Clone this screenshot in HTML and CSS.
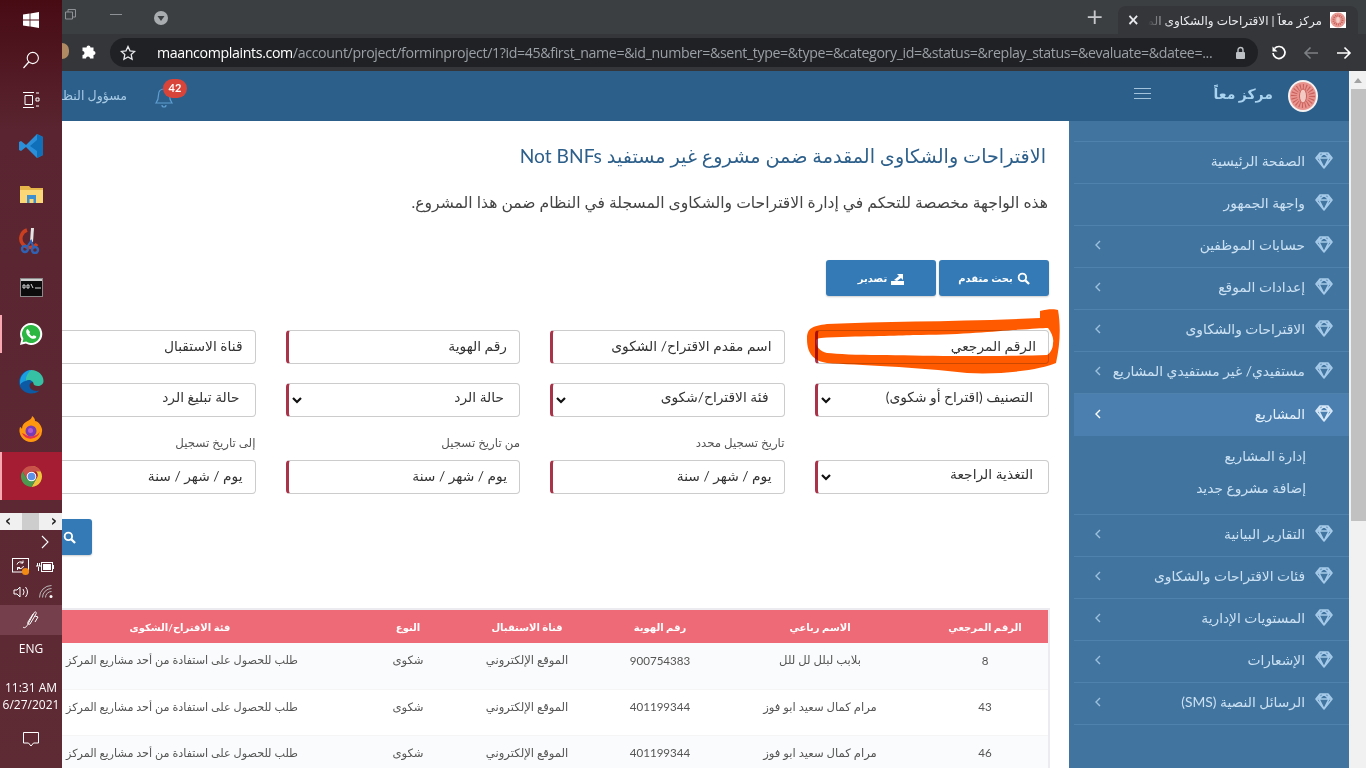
FILE: index.html
```html
<!DOCTYPE html>
<html lang="ar">
<head>
<meta charset="utf-8">
<title>مركز معاً</title>
<link rel="stylesheet" href="styles.css">
</head>
<body>
<svg class="defs" width="0" height="0" aria-hidden="true">
  <defs>
    <symbol id="gem" viewBox="0 0 18 18"><path d="M5 2h8l4 5-8 10L1 7z M1 7h16 M5 2l-1 5 5 10 5-10-1-5 M4 7l5-5 5 5" fill="none" stroke="currentColor" stroke-width="1.6" stroke-linejoin="round"/></symbol>
    <symbol id="chev" viewBox="0 0 8 12"><path d="M6 2 2 6l4 4" fill="none" stroke="currentColor" stroke-width="1.4"/></symbol>
    <symbol id="down" viewBox="0 0 12 8"><path d="M2 2l4 4 4-4" fill="none" stroke="#111" stroke-width="2.2"/></symbol>
    <symbol id="lens" viewBox="0 0 14 14"><circle cx="5.8" cy="5.8" r="4" fill="none" stroke="currentColor" stroke-width="2"/><path d="M9 9l4 4" stroke="currentColor" stroke-width="2.4"/></symbol>
  </defs>
</svg>
<div class="screen">
  <aside class="taskbar">
    <div class="tile t40"><svg width="16" height="16" viewBox="0 0 16 16"><path fill="#fff" d="M0 2.6 6.6 1.6V7.6H0zM7.4 1.5 16 0V7.6H7.4zM0 8.4H6.6V14.4L0 13.4zM7.4 8.4H16V16L7.4 14.6z"/></svg></div>
    <div class="tile t39"><svg width="18" height="18" viewBox="0 0 18 18"><circle cx="10.8" cy="7" r="5.6" fill="none" stroke="#fff" stroke-width="1.1"/><path d="M6.8 11 1.5 17" stroke="#fff" stroke-width="1.2"/></svg></div>
    <div class="tile t41"><svg width="18" height="18" viewBox="0 0 18 18"><path d="M1 1.5h11M1 16.5h11M3 4.5h7.5v9H3z" fill="none" stroke="#fff" stroke-width="1"/><path d="M14 2h3M14 7h3v3h-3zM14 15h3" fill="none" stroke="#fff"/></svg></div>
    <div class="tile t48 first"><svg width="26" height="26" viewBox="0 0 26 26"><path fill="#2a8fd8" d="M19 1 25 4v18l-6 3L8 14 3 18 1 17V9l2-1 5 4z"/><path fill="#0f6fb8" d="M19 1 25 4v18l-6 3V18l-7-5 7-6z"/></svg></div>
    <div class="tile t48"><svg width="23" height="20" viewBox="0 0 23 20"><path fill="#e6b64b" d="M0 2h9l2 2h12v15H0z"/><path fill="#fbd777" d="M0 6h23v13H0z"/><path fill="#3d8fd0" d="M7 11h9v8h-2.5v-4h-4v4H7z"/></svg></div>
    <div class="tile t46"><svg width="24" height="26" viewBox="0 0 24 26"><path d="M8 2a9 9 0 1 0 10 14" fill="none" stroke="#c93f1f" stroke-width="3.5"/><path d="M12 0h3l-1 14h-3z" fill="#e5e5e5"/><circle cx="6" cy="21" r="3" fill="none" stroke="#2f62b5" stroke-width="2.4"/><circle cx="16" cy="22" r="3" fill="none" stroke="#2f62b5" stroke-width="2.4"/><path d="M8 19l4-6 3 7" fill="none" stroke="#2f62b5" stroke-width="2"/></svg></div>
    <div class="tile t46"><svg width="23" height="19" viewBox="0 0 23 19"><rect x=".5" y=".5" width="22" height="18" fill="#0c0c0c" stroke="#8a8a8a"/><path d="M1 1h21v2H1z" fill="#cfcfcf"/><path d="M3 7h2v3H3zM7 7h2v3H7zM11 6l2 4M15 10h6" stroke="#ddd" fill="none"/></svg></div>
    <div class="tile t48 open"><svg width="24" height="24" viewBox="0 0 24 24"><path fill="#fff" d="M12 1a11 11 0 0 0-9.6 16.300L1 23l5.900-1.400A11 11 0 1 0 12 1z"/><path fill="#2bb741" d="M12 3a9 9 0 0 0-7.600 13.800L3.600 20.300l3.600-.8A9 9 0 1 0 12 3z"/><path fill="#fff" d="M8.600 7c-.5 0-1.400.9-1.400 2.400 0 3 3.800 7.400 7.600 7.400 1.500 0 2.500-1 2.500-2 0-.4-2.300-1.500-2.600-1.500-.4 0-1 1-1.400 1-.8 0-3-2.100-3-3 0-.4.800-.9.800-1.400C10.100 9.600 9.300 7 8.600 7z"/></svg></div>
    <div class="tile t47"><svg width="25" height="25" viewBox="0 0 25 25"><path fill="#0c59a4" d="M12 1a12 12 0 0 0-11.500 15C2 22 8 24.500 12.500 24.500c3.500 0 6-1 8-3-5 1.500-10-1-10-5 0-2 2-3.500 4-3.500z"/><path fill="#37c1a4" d="M12.500 1C19 1 24.500 6 24.500 12c0 3.500-3 5-5.500 5-3 0-4.500-1-4.500-2.500 0-2-4-5-8-2.500C6 6 8 1 12.500 1z"/><path fill="#1b9de2" d="M1 13C1 7 6 1 12.500 1 9 3 7 7 6.500 12 4 12.500 2 14 1 16z"/></svg></div>
    <div class="tile t47"><svg width="24" height="26" viewBox="0 0 24 26"><path fill="#ff980e" d="M12 26A11.500 11.500 0 0 1 1 11c1 0 1.500 1 2 2 0-4 2-6 4-7 3-2 6-3 6-6 3 2 3 4 3 5 3 0 6 4 7 8a11.500 11.500 0 0 1-11 13z"/><path fill="#e8304f" d="M3 17a9.500 9.500 0 0 0 18-2c-2 5-9 7-14 4-2-1-3-2-4-2z"/><circle cx="12" cy="15" r="5.500" fill="#7b3bb5"/><circle cx="11.500" cy="14.500" r="2.500" fill="#b05cd0"/></svg></div>
    <div class="tile t48 active"><svg width="23" height="23" viewBox="0 0 24 24"><path fill="#e0a82e" d="M12 1a11 11 0 0 1 9.500 5.500L12 6.500z"/><path fill="#f0c53e" d="M21.500 6.500A11 11 0 0 1 12 23l4.800-8.200a5.500 5.500 0 0 0-.2-8.300z"/><path fill="#c9524a" d="M12 1a11 11 0 0 0-9.500 5.500l4.800 8.200 0-3a5 5 0 0 1 4.700-5.200h9.500A11 11 0 0 0 12 1z"/><path fill="#4c9a4f" d="M2.500 6.500A11 11 0 0 0 12 23l4.800-8.200-9.500 0z"/><circle cx="12" cy="12" r="5" fill="#fff"/><circle cx="12" cy="12" r="4" fill="#5c91e6"/></svg></div>
    <div class="tray-scroll"><span class="arrow">‹</span><span class="knob"></span><span class="arrow">›</span></div>
    <div class="tray-more"><svg width="10" height="14" viewBox="0 0 10 14"><path d="M2 1l6 6-6 6" fill="none" stroke="#fff" stroke-width="1.100"/></svg></div>
    <div class="tray-row">
      <svg width="22" height="18" viewBox="0 0 22 18"><rect x="1.500" y=".5" width="16" height="13.500" fill="none" stroke="#fff"/><path d="M6 6.500a3.500 3.500 0 0 1 6-1.500M12.500 8a3.500 3.500 0 0 1-6 1.500M12 2.500V5H9.500M6.500 12V9.500H9" fill="none" stroke="#fff"/><circle cx="14.500" cy="13.500" r="3.600" fill="#f08a14"/></svg>
      <svg width="18" height="12" viewBox="0 0 18 12"><rect x="5.500" y="1.500" width="11" height="9" fill="none" stroke="#fff"/><rect x="7" y="3" width="8" height="6" fill="#fff"/><path d="M17.500 4v4M0 5h5M1.500 2v3M3.500 2v3M2.500 6v4" stroke="#fff" fill="none"/></svg>
    </div>
    <div class="tray-row tight">
      <svg width="17" height="14" viewBox="0 0 17 14"><path d="M1 5h3l3-3v10L4 9H1zM10 4a5 5 0 0 1 0 6M12.500 2a8 8 0 0 1 0 10" fill="none" stroke="#fff"/></svg>
      <svg width="14" height="13" viewBox="0 0 14 13"><path d="M.5 12.500A12 12 0 0 1 12.500.5M3.500 12.500a9 9 0 0 1 9-9M6.500 12.500a6 6 0 0 1 6-6" fill="none" stroke="#bbb"/><circle cx="12" cy="11.500" r="1.500" fill="#fff"/></svg>
    </div>
    <div class="pen"><svg width="20" height="20" viewBox="0 0 20 20"><path d="M2 17c2 2 4-1 5-3l6-11c1-2 3-1 2 1l-6 10c-1 1-3 0-2-2l5-8M14 6l3 1-3 5" fill="none" stroke="#fff"/></svg></div>
    <div class="lang">ENG</div>
    <div class="clock">11:31 AM<br>6/27/2021</div>
    <div class="notify"><svg width="16" height="15" viewBox="0 0 16 15"><path d="M.5.500h15v10.500h-5l-2.500 3-2.500-3h-5z" fill="none" stroke="#fff"/></svg></div>
  </aside>

  <div class="window">
    <div class="tabstrip">
      <svg class="ctl-restore" width="11" height="11" viewBox="0 0 11 11"><path d="M.5 3h7v7h-7zM3 3V.5h7.500V8H8" fill="none" stroke="#8e9196"/></svg>
      <span class="ctl-min"></span>
      <svg class="ctl-menu" width="14" height="14" viewBox="0 0 14 14"><circle cx="7" cy="7" r="7" fill="#aaadb0"/><path d="M3.500 5h7L7 10z" fill="#3c3f42"/></svg>
      <span class="new-tab">+</span>
      <div class="tab">
        <span class="tab-x">×</span>
        <span class="tab-title" dir="rtl">مركز معاً | الاقتراحات والشكاوى المق</span>
        <svg class="fav" width="16" height="16" viewBox="0 0 16 16"><rect width="16" height="16" fill="#fff"/><circle cx="8" cy="8" r="7.500" fill="#e79a94"/><circle cx="8" cy="8" r="4.500" fill="none" stroke="#c6605a" stroke-width="2" stroke-dasharray="1 1"/><ellipse cx="8" cy="8" rx="1.800" ry="3" fill="#f3cfc9"/></svg>
      </div>
    </div>
    <div class="toolbar">
      <span class="avatar"></span>
      <svg class="puzzle" width="15" height="15" viewBox="0 0 15 15"><path fill="#fff" d="M5.500 2.500a2 2 0 1 1 4 0h3v3.500a2 2 0 1 1 0 4V13.500H9a2 2 0 1 0-4 0H1.500V10a2 2 0 1 0 0-4V2.500z"/></svg>
      <div class="omnibox">
        <svg width="16" height="16" viewBox="0 0 16 16"><path d="M8 1.500l2 4.300 4.700.6-3.500 3.200.9 4.700L8 12l-4.100 2.300.9-4.700L1.300 6.400 6 5.800z" fill="none" stroke="#e8eaed" stroke-width="1.300"/></svg>
        <div class="url"><b>maancomplaints.com</b>/account/project/forminproject/1?id=45&amp;first_name=&amp;id_number=&amp;sent_type=&amp;type=&amp;category_id=&amp;status=&amp;replay_status=&amp;evaluate=&amp;datee=...</div>
        <svg width="11" height="14" viewBox="0 0 11 14"><path d="M3 6V4a2.500 2.500 0 0 1 5 0v2" fill="none" stroke="#bdc1c6" stroke-width="1.400"/><rect x="1" y="6" width="9" height="7" rx="1" fill="#bdc1c6"/></svg>
      </div>
      <svg class="nav-reload" width="16" height="16" viewBox="0 0 16 16"><path d="M3.500 3.500A6 6 0 1 1 2 8" fill="none" stroke="#fff" stroke-width="1.700"/><path d="M1.500 1.500v5h5z" fill="#fff"/></svg>
      <svg class="nav-back" width="16" height="14" viewBox="0 0 16 14"><path d="M15 7H2M7.500 1.500 2 7l5.500 5.500" fill="none" stroke="#7d8084" stroke-width="1.600"/></svg>
      <svg class="nav-fwd" width="16" height="14" viewBox="0 0 16 14"><path d="M1 7h13M8.500 1.500 14 7l-5.500 5.500" fill="none" stroke="#fff" stroke-width="1.600"/></svg>
    </div>

    <div class="viewport">
      <div class="page" dir="rtl">
        <header class="app-head">
          <svg class="logo" width="30" height="32" viewBox="0 0 30 32"><ellipse cx="15" cy="16" rx="15" ry="16" fill="#f5f2f1"/><ellipse cx="15" cy="16" rx="13" ry="14" fill="#e8938e"/><circle cx="15" cy="16" r="9" fill="none" stroke="#c9605b" stroke-width="6" stroke-dasharray="1 1.800"/><ellipse cx="15" cy="16" rx="3.500" ry="7" fill="#f3c9c3" stroke="#c9605b"/></svg>
          <div class="brand">مركز معاً</div>
          <div class="burger"><span></span><span></span><span></span></div>
          <div class="user">
            <div class="bell">
              <svg width="18" height="22" viewBox="0 0 18 22"><path d="M9 2c-4 0-5.500 3-5.500 6 0 4-1 6-2.500 8h16c-1.500-2-2.500-4-2.500-8 0-3-1.500-6-5.500-6zM7 18a2 2 0 0 0 4 0" fill="none" stroke="#5e9fd2" stroke-width="1.200"/></svg>
              <span class="badge">42</span>
            </div>
            <div class="user-name">مسؤول النظام</div>
          </div>
        </header>
        <div class="body-row">
          <nav class="sidebar">
            <div class="side-head"></div>
            <a class="nav-item"><svg class="gem"><use href="#gem"/></svg><span>الصفحة الرئيسية</span></a>
            <a class="nav-item"><svg class="gem"><use href="#gem"/></svg><span>واجهة الجمهور</span></a>
            <a class="nav-item"><svg class="gem"><use href="#gem"/></svg><span>حسابات الموظفين</span><svg class="chev"><use href="#chev"/></svg></a>
            <a class="nav-item"><svg class="gem"><use href="#gem"/></svg><span>إعدادات الموقع</span><svg class="chev"><use href="#chev"/></svg></a>
            <a class="nav-item"><svg class="gem"><use href="#gem"/></svg><span>الاقتراحات والشكاوى</span><svg class="chev"><use href="#chev"/></svg></a>
            <a class="nav-item"><svg class="gem"><use href="#gem"/></svg><span>مستفيدي/ غير مستفيدي المشاريع</span><svg class="chev"><use href="#chev"/></svg></a>
            <a class="nav-item current"><svg class="gem"><use href="#gem"/></svg><span>المشاريع</span><svg class="chev"><use href="#chev"/></svg></a>
            <div class="sub-list"><a>إدارة المشاريع</a><a>إضافة مشروع جديد</a></div>
            <a class="nav-item"><svg class="gem"><use href="#gem"/></svg><span>التقارير البيانية</span><svg class="chev"><use href="#chev"/></svg></a>
            <a class="nav-item"><svg class="gem"><use href="#gem"/></svg><span>فئات الاقتراحات والشكاوى</span><svg class="chev"><use href="#chev"/></svg></a>
            <a class="nav-item"><svg class="gem"><use href="#gem"/></svg><span>المستويات الإدارية</span><svg class="chev"><use href="#chev"/></svg></a>
            <a class="nav-item"><svg class="gem"><use href="#gem"/></svg><span>الإشعارات</span><svg class="chev"><use href="#chev"/></svg></a>
            <a class="nav-item"><svg class="gem"><use href="#gem"/></svg><span>الرسائل النصية (SMS)</span><svg class="chev"><use href="#chev"/></svg></a>
          </nav>
          <main class="main">
            <div class="inner">
              <h1 class="title">الاقتراحات والشكاوى المقدمة ضمن مشروع غير مستفيد Not BNFs</h1>
              <p class="desc">هذه الواجهة مخصصة للتحكم في إدارة الاقتراحات والشكاوى المسجلة في النظام ضمن هذا المشروع.</p>
              <div class="actions">
                <a class="btn"><svg class="ico" width="13" height="13"><use href="#lens"/></svg>بحث متقدم</a>
                <a class="btn"><svg class="ico" width="13" height="13" viewBox="0 0 13 13"><path fill="#fff" d="M0 9h13v4H0zM3 8l5-4-2-2h6v6l-2-2-4 3z"/></svg>تصدير</a>
              </div>
              <div class="form-grid">
                <div class="field">الرقم المرجعي</div>
                <div class="field">اسم مقدم الاقتراح/ الشكوى</div>
                <div class="field">رقم الهوية</div>
                <div class="field">قناة الاستقبال</div>
                <div class="field select"><span>التصنيف (اقتراح أو شكوى)</span><svg width="12" height="8"><use href="#down"/></svg></div>
                <div class="field select"><span>فئة الاقتراح/شكوى</span><svg width="12" height="8"><use href="#down"/></svg></div>
                <div class="field select"><span>حالة الرد</span><svg width="12" height="8"><use href="#down"/></svg></div>
                <div class="field select"><span>حالة تبليغ الرد</span><svg width="12" height="8"><use href="#down"/></svg></div>
                <div class="field select"><span>التغذية الراجعة</span><svg width="12" height="8"><use href="#down"/></svg></div>
                <div><div class="date-label">تاريخ تسجيل محدد</div><div class="field">يوم / شهر / سنة</div></div>
                <div><div class="date-label">من تاريخ تسجيل</div><div class="field">يوم / شهر / سنة</div></div>
                <div><div class="date-label">إلى تاريخ تسجيل</div><div class="field">يوم / شهر / سنة</div></div>
              </div>
              <div class="search-row"><a class="btn-search"><svg width="13" height="13"><use href="#lens"/></svg></a></div>
              <div class="table-wrap">
                <table class="data">
                  <colgroup><col class="c1"><col class="c2"><col class="c3"><col class="c4"><col class="c5"><col class="c6"></colgroup>
                  <thead><tr><th>الرقم المرجعي</th><th>الاسم رباعي</th><th>رقم الهوية</th><th>قناة الاستقبال</th><th>النوع</th><th>فئة الاقتراح/الشكوى</th></tr></thead>
                  <tbody>
                    <tr><td>8</td><td>بلابب لبلل لل للل</td><td>900754383</td><td>الموقع الإلكتروني</td><td>شكوى</td><td class="cat">طلب للحصول على استفادة من أحد مشاريع المركز</td></tr>
                    <tr><td>43</td><td>مرام كمال سعيد ابو فوز</td><td>401199344</td><td>الموقع الإلكتروني</td><td>شكوى</td><td class="cat">طلب للحصول على استفادة من أحد مشاريع المركز</td></tr>
                    <tr><td>46</td><td>مرام كمال سعيد ابو فوز</td><td>401199344</td><td>الموقع الإلكتروني</td><td>شكوى</td><td class="cat">طلب للحصول على استفادة من أحد مشاريع المركز</td></tr>
                  </tbody>
                </table>
              </div>
            </div>
            <svg class="scribble" width="270" height="75" viewBox="0 0 270 75"><path fill="#ff5a00" fill-rule="evenodd" d="M0 30C0 19 5 17 20 15 80 12 150 13 233 9V2C240 0 248 0 251 1 254 18 253 36 249 54 235 60 200 66 160 64 110 58 50 56 20 54 8 52 0 46 0 30ZM9 32C9 30 10 29 20 28.500 60 27 90 27 106 26 150 26 180 23 206 21 225 20 235 19 241 19 245 24 247 30 246 34 246 40 243 44 240 46 210 47 170 47 146 47 120 47 90 46 73 46 50 46 30 45 20 44 13 42 9 38 9 32Z"/></svg>
          </main>
        </div>
      </div>
      <div class="scrollbar"><span class="sb-up"></span><span class="sb-thumb"></span></div>
    </div>
  </div>
</div>
</body>
</html>
```
FILE: styles.css
```css
* { box-sizing: border-box; }
html, body { margin: 0; height: 100%; overflow: hidden; background: #fff; }
body { font-family: Lato, "DejaVu Sans", sans-serif; color: #333; }
.defs { position: absolute; }
a { display: flex; }
.screen { display: flex; width: 1366px; height: 768px; overflow: hidden; }

/* taskbar */
.taskbar { width: 62px; flex: none; display: flex; flex-direction: column; align-items: stretch; background: linear-gradient(180deg, #470b14 0, #5a2530 130px, #5e2a34 100%); color: #fff; }
.tile { display: flex; align-items: center; justify-content: center; position: relative; }
.t39 { height: 39px; } .t40 { height: 40px; } .t41 { height: 41px; }
.t46 { height: 46px; } .t47 { height: 47px; } .t48 { height: 48px; }
.first { margin-top: 2px; }
.open::before, .active::before { content: ""; position: absolute; left: 0; top: 5px; bottom: 5px; width: 2px; background: #f7a8b0; }
.active { background: #a41d33; }
.active::before { top: 0; bottom: 0; }
.tray-scroll { margin-top: 13px; height: 17px; background: #f0f0f0; display: flex; align-items: center; justify-content: space-between; color: #222; font: bold 15px/17px "DejaVu Sans", sans-serif; padding: 0 5px; }
.knob { width: 17px; height: 17px; background: #cdcdcd; margin-left: -2px; }
.tray-more { height: 24px; display: flex; align-items: center; justify-content: flex-end; padding-right: 12px; }
.tray-row { height: 26px; display: flex; align-items: center; justify-content: space-between; padding: 0 8px 0 11px; }
.tray-row.tight { height: 23px; padding: 0 9px 0 13px; }
.pen { height: 30px; margin-top: 2px; background: #75404b; display: flex; align-items: center; justify-content: center; }
.lang { height: 32px; margin-top: -2px; font: 12px/32px "Open Sans", sans-serif; text-align: center; }
.clock { margin-top: 14px; height: 36px; font: 12px/17px "Open Sans", sans-serif; text-align: center; white-space: nowrap; }
.notify { margin-top: 17px; display: flex; justify-content: center; }

/* chrome */
.window { flex: 1; min-width: 0; display: flex; flex-direction: column; }
.tabstrip { height: 34px; flex: none; background: #3c3f42; display: flex; align-items: center; position: relative; overflow: hidden; }
.ctl-restore { margin: 0 0 6px 3px; }
.ctl-min { width: 12px; height: 1px; background: #8e9196; margin: 0 0 6px 34px; }
.ctl-menu { margin: 2px 0 0 32px; }
.new-tab { margin-left: auto; color: #c5c7ca; font: 22px/34px "DejaVu Sans", sans-serif; margin-right: 14px; }
.tab { width: 240px; height: 28px; margin: 6px 8px 0 0; flex: none; background: #35363a; border-radius: 8px 8px 0 0; display: flex; align-items: center; padding: 0 12px 0 9px; gap: 8px; color: #e8eaed; }
.tab-x { font: bold 15px/1 "DejaVu Sans", sans-serif; color: #e8eaed; }
.tab-title { flex: 1; min-width: 0; overflow: hidden; white-space: nowrap; font-size: 12px; text-align: right; -webkit-mask-image: linear-gradient(to right, transparent, #000 22px); mask-image: linear-gradient(to right, transparent, #000 22px); }
.fav { flex: none; }
.toolbar { height: 37px; flex: none; background: #35363a; display: flex; align-items: center; position: relative; }
.avatar { width: 7px; height: 16px; background: #b08a63; border-radius: 0 8px 8px 0; margin-top: -4px; }
.puzzle { margin: 0 0 0 12px; }
.omnibox { width: 1148px; height: 29px; margin-left: 14px; background: #202124; border-radius: 15px; display: flex; align-items: center; padding: 0 12px 0 10px; }
.url { flex: 1; min-width: 0; margin-left: 21px; color: #9aa0a6; font: 14.2px/29px "Open Sans", sans-serif; letter-spacing: -.37px; white-space: nowrap; overflow: hidden; }
.url b { color: #fff; font-weight: 400; }
.nav-reload { margin-left: 13px; }
.nav-back { margin-left: 16px; }
.nav-fwd { margin-left: 17px; }

/* page */
.viewport { flex: 1; min-height: 0; display: flex; }
.page { width: 1287px; flex: none; display: flex; flex-direction: column; overflow: hidden; }
.scrollbar { flex: 1; background: #f1f1f1; display: flex; flex-direction: column; align-items: flex-end; }
.sb-up { width: 0; height: 0; margin: 7px 4px 6px 0; border: 4px solid transparent; border-top: 0; border-bottom: 5px solid #a3a3a3; }
.sb-thumb { width: 15px; height: 432px; background: #c1c1c1; }
.app-head { height: 50px; flex: none; background: #2d5f8b; display: flex; align-items: center; padding-right: 31px; overflow: hidden; }
.logo { flex: none; }
.brand { width: 80px; margin-right: 15px; color: #a9d3ef; font-size: 14px; font-weight: 700; white-space: nowrap; margin-top: -6px; }
.burger { margin-right: 42px; width: 17px; display: flex; flex-direction: column; gap: 4px; margin-top: -5px; }
.burger span { height: 1px; background: #a3c3dc; }
.user { width: 150px; margin-right: auto; margin-left: -30px; padding-right: 9px; display: flex; align-items: center; gap: 28px; flex: none; }
.bell { position: relative; width: 18px; height: 22px; flex: none; margin-top: 4px; }
.badge { position: absolute; right: -14px; top: -8px; width: 24px; height: 19px; border-radius: 10px; background: #d8443a; color: #fff; font: 700 11px/18px Lato, sans-serif; text-align: center; }
.user-name { color: #a8cbe5; font-size: 12.500px; white-space: nowrap; margin-top: -2px; }
.body-row { flex: 1; min-height: 0; display: flex; }
.sidebar { width: 280px; flex: none; background: #41749f; padding-left: 5px; color: #cbe1f3; font-size: 13.800px; }
.side-head { height: 21px; border-bottom: 1px solid #4f82ad; }
.nav-item { height: 42px; display: flex; align-items: center; padding: 0 16px 4px 0; gap: 10px; border-bottom: 1px solid #4f82ad; white-space: nowrap; }
.nav-item.current { background: #4a7fb0; border-bottom: 0; color: #e4f0fa; padding-bottom: 3px; }
.gem { width: 18px; height: 18px; flex: none; color: #a5cae9; margin-top: -1px; }
.current .gem { color: #d6e8f7; }
.chev { width: 8px; height: 12px; margin-right: auto; margin-left: 20px; flex: none; color: #9cc0de; }
.current .chev { color: #fff; }
.sub-list { height: 79px; padding: 3px 43px 0 0; border-bottom: 1px solid #4f82ad; }
.sub-list a { height: 32px; align-items: center; }

.main { flex: 1; min-width: 0; overflow: hidden; position: relative; background: #fff; }
.inner { width: 1027px; margin-right: 20px; }
.title { margin: 0; padding: 20px 3px 0 0; font-size: 19.200px; font-weight: 400; line-height: 30px; color: #2d5f8b; white-space: nowrap; }
.desc { margin: 19px 0 0; padding-right: 1px; font-size: 15.600px; line-height: 24px; color: #444; white-space: nowrap; }
.actions { margin-top: 46px; display: flex; gap: 3px; }
.btn { width: 110px; height: 36px; background: #337ab7; border-radius: 3px; color: #fff; font-size: 10px; font-weight: 700; align-items: center; justify-content: center; gap: 4px; box-shadow: 0 1px 2px rgba(0,0,0,.2); }
.ico { flex: none; }
.form-grid { margin-top: 34px; display: grid; grid-template-columns: repeat(4, 234.500px); column-gap: 30px; row-gap: 19px; align-items: end; }
.field { height: 34px; background: #fff; border: 1px solid #ccc; border-left: 3px solid #a93349; border-radius: 4px; padding: 0 12px 4px 8px; font-size: 13.800px; color: #333; white-space: nowrap; display: flex; align-items: center; justify-content: space-between; }
.select { padding-left: 2px; }
.select span { padding-right: 3px; padding-bottom: 3px; }
.select svg { margin-top: 4px; }
.date-label { height: 24px; font-size: 11.800px; line-height: 14px; color: #555; }
.search-row { margin-top: 25px; display: flex; justify-content: flex-end; }
.btn-search { width: 70px; height: 36px; background: #337ab7; border-radius: 3px; color: #fff; align-items: center; padding-left: 41px; justify-content: flex-end; box-shadow: 0 1px 2px rgba(0,0,0,.2); }
.table-wrap { margin: 53px -1px 0 0; width: 1054px; border-top: 2px solid #ececf0; border-right: 2px solid #ececf0; }
.data { border-collapse: collapse; table-layout: fixed; width: 1052px; font-size: 11.600px; }
.c1 { width: 126px; } .c2 { width: 204px; } .c3 { width: 116px; } .c4 { width: 150px; } .c5 { width: 88px; } .c6 { width: 368px; }
.data th { height: 33px; padding: 0; background: #ee6a77; color: #fff; font-weight: 700; font-size: 10px; text-align: center; white-space: nowrap; }
.data td { height: 46px; padding: 0 0 11px; text-align: center; color: #555; white-space: nowrap; vertical-align: middle; overflow: hidden; }
.data tbody tr { background: #fff; border-bottom: 1px solid #f5f5f5; }
.data tbody tr:nth-child(odd) { background: #fafbfc; }
.data td.cat { text-align: right; padding-right: 66px; font-size: 11.200px; }
.scribble { position: absolute; left: 745px; top: 188px; mix-blend-mode: multiply; pointer-events: none; }
```
